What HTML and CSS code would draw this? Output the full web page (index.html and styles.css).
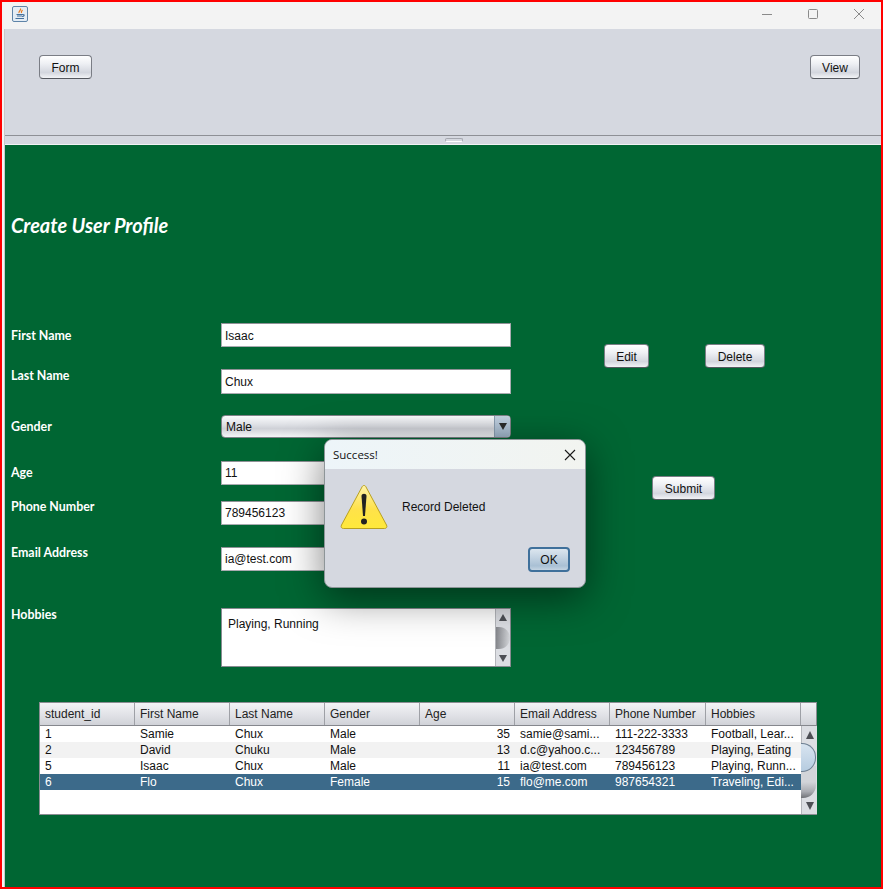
FILE: index.html
```html
<!DOCTYPE html>
<html>
<head>
	<meta charset="utf-8">
	<title>Create User Profile</title>
	<link rel="stylesheet" href="styles.css">
</head>
<body>
	<div class="frame">
		<div class="titlebar">
			<svg class="java_icon" width="16" height="16" viewBox="0 0 16 16">
				<rect x="0.5" y="0.5" width="15" height="15" rx="1.5" fill="#e4ecf4" stroke="#5f84a8"/>
				<path d="M8.5 2.5 C9.5 4 6.5 5 7 7 M10.5 4 C9.5 5 9 6 9.5 7" fill="none" stroke="#e8791e" stroke-width="1.2"/>
				<path d="M4.5 8.5 H10.5 M5 10 H10 M10.5 8.5 C13 8.5 12.5 10.5 10 10.5 M3.5 12.5 H12" fill="none" stroke="#44709c" stroke-width="1.1"/>
			</svg>
			<div class="win_controls">
				<svg width="12" height="12" viewBox="0 0 12 12"><path d="M1 6.5 H11" stroke="#8a8a8a"/></svg>
				<svg width="12" height="12" viewBox="0 0 12 12"><rect x="1.5" y="1.5" width="9" height="9" rx="1" fill="none" stroke="#8a8a8a"/></svg>
				<svg width="12" height="12" viewBox="0 0 12 12"><path d="M1 1 L11 11 M11 1 L1 11" stroke="#8a8a8a"/></svg>
			</div>
		</div>

		<div class="top_panel">
			<button class="btn btn_form">Form</button>
			<button class="btn btn_view">View</button>
		</div>

		<div class="splitter"><span class="grip"></span></div>

		<div class="main_panel">
			<h1 class="page_title">Create User Profile</h1>

			<div class="form_area">
				<div class="labels">
					<label class="lb_first">First Name</label>
					<label class="lb_last">Last Name</label>
					<label class="lb_gender">Gender</label>
					<label class="lb_age">Age</label>
					<label class="lb_phone">Phone Number</label>
					<label class="lb_email">Email Address</label>
					<label class="lb_hobbies">Hobbies</label>
				</div>

				<div class="fields">
					<div class="text_field tf_first">Isaac</div>
					<div class="text_field tf_last">Chux</div>
					<div class="combo">
						<span class="combo_text">Male</span>
						<span class="combo_arrow"><svg width="8" height="7" viewBox="0 0 8 7"><path d="M0 0 H8 L4 7 Z" fill="#2b2b2b"/></svg></span>
					</div>
					<div class="text_field tf_age">11</div>
					<div class="text_field tf_phone">789456123</div>
					<div class="text_field tf_email">ia@test.com</div>
					<div class="text_area">
						<span class="area_text">Playing, Running</span>
						<div class="area_scroll">
							<svg width="8" height="7" viewBox="0 0 8 7"><path d="M0 7 H8 L4 0 Z" fill="#4d4f55"/></svg>
							<span class="area_thumb"></span>
							<svg width="8" height="7" viewBox="0 0 8 7"><path d="M0 0 H8 L4 7 Z" fill="#4d4f55"/></svg>
						</div>
					</div>
				</div>

				<div class="actions">
					<div class="actions_row">
						<button class="btn btn_edit">Edit</button>
						<button class="btn btn_delete">Delete</button>
					</div>
					<button class="btn btn_submit">Submit</button>
				</div>
			</div>

			<div class="table_wrap">
				<div class="table_head">
					<div class="th">student_id</div>
					<div class="th">First Name</div>
					<div class="th">Last Name</div>
					<div class="th">Gender</div>
					<div class="th">Age</div>
					<div class="th">Email Address</div>
					<div class="th">Phone Number</div>
					<div class="th">Hobbies</div>
					<div class="th th_corner"></div>
				</div>
				<div class="table_body">
					<div class="rows">
						<div class="row"><span>1</span><span>Samie</span><span>Chux</span><span>Male</span><span class="num">35</span><span>samie@sami...</span><span>111-222-3333</span><span>Football, Lear...</span></div>
						<div class="row alt"><span>2</span><span>David</span><span>Chuku</span><span>Male</span><span class="num">13</span><span>d.c@yahoo.c...</span><span>123456789</span><span>Playing, Eating</span></div>
						<div class="row"><span>5</span><span>Isaac</span><span>Chux</span><span>Male</span><span class="num">11</span><span>ia@test.com</span><span>789456123</span><span>Playing, Runn...</span></div>
						<div class="row selected"><span>6</span><span>Flo</span><span>Chux</span><span>Female</span><span class="num">15</span><span>flo@me.com</span><span>987654321</span><span>Traveling, Edi...</span></div>
					</div>
					<div class="table_scroll">
						<svg width="8" height="8" viewBox="0 0 8 8"><path d="M0 8 H8 L4 0 Z" fill="#4d4f55"/></svg>
						<span class="table_track"></span>
						<span class="table_thumb"></span>
						<svg width="8" height="8" viewBox="0 0 8 8"><path d="M0 0 H8 L4 8 Z" fill="#4d4f55"/></svg>
					</div>
				</div>
			</div>
		</div>

		<div class="dialog">
			<div class="dialog_title">
				<span>Success!</span>
				<svg width="12" height="12" viewBox="0 0 12 12"><path d="M1 1 L11 11 M11 1 L1 11" stroke="#1a1a1a" stroke-width="1.1"/></svg>
			</div>
			<div class="dialog_body">
				<svg class="warn_icon" width="48" height="46" viewBox="0 0 48 46">
					<defs>
						<linearGradient id="warnfill" x1="0" y1="0" x2="0" y2="1">
							<stop offset="0" stop-color="#fff3a8"/>
							<stop offset="0.55" stop-color="#ffe24a"/>
							<stop offset="1" stop-color="#ffe93a"/>
						</linearGradient>
					</defs>
					<path d="M24 1.5 C25 1.5 25.5 2 26 3 L46.5 41 C47.5 43 46.5 44.5 44.5 44.5 H3.5 C1.5 44.5 0.5 43 1.5 41 L22 3 C22.5 2 23 1.5 24 1.5 Z" fill="url(#warnfill)" stroke="#b8a020"/>
					<path d="M21.5 12 C21.5 9 26.5 9 26.5 12 L25 32 H23 Z" fill="#222"/>
					<circle cx="24" cy="37.5" r="3" fill="#222"/>
				</svg>
				<span class="dialog_msg">Record Deleted</span>
			</div>
			<div class="dialog_foot">
				<button class="btn btn_ok">OK</button>
			</div>
		</div>
	</div>
</body>
</html>
```
FILE: styles.css
```css
html, body {
	margin: 0;
	width: 100%;
	height: 100%;
	overflow: hidden;
	font-family: "Liberation Sans", Arial, sans-serif;
	font-size: 12px;
	color: #111;
}

.frame {
	position: relative;
	box-sizing: border-box;
	width: 883px;
	height: 889px;
	border: 2px solid #ff0000;
	display: flex;
	flex-direction: column;
	background: linear-gradient(90deg, #f4f4f4, #f4f4f4 2px, #c9c9c9 2px);
}

.titlebar {
	height: 27px;
	flex: none;
	background: #f3f3f3;
	display: flex;
	align-items: center;
	justify-content: space-between;
	padding-left: 10px;
	padding-right: 16px;
}

.java_icon {
	margin-top: -3px;
}

.win_controls {
	display: flex;
	gap: 34px;
	margin-top: -3px;
}

.top_panel {
	height: 106px;
	flex: none;
	margin-left: 3px;
	background: #d5d8e0;
	display: flex;
	justify-content: space-between;
	align-items: flex-start;
	padding: 26px 21px 0 34px;
	box-sizing: border-box;
}

.splitter {
	height: 10px;
	flex: none;
	margin-left: 3px;
	box-sizing: border-box;
	border-top: 1px solid #8e9096;
	border-bottom: 1px solid #f2f3f5;
	background: #d5d8e0;
	display: flex;
	justify-content: center;
	padding-top: 2px;
}

.grip {
	width: 18px;
	height: 4px;
	border: 1px solid #a4a7af;
	border-bottom-color: #fff;
	border-radius: 2px;
	box-sizing: border-box;
	margin-left: 22px;
}

.btn {
	box-sizing: border-box;
	height: 24px;
	padding: 1px 0 0;
	border: 1px solid #7a7d85;
	border-bottom-color: #55585f;
	border-radius: 4px;
	background: linear-gradient(#ffffff 0%, #eef0f4 35%, #d3d6de 75%, #f2f3f6 100%);
	font-family: inherit;
	font-size: 12px;
	color: #111;
}

.btn_form { width: 53px; }
.btn_view { width: 50px; }

.main_panel {
	flex: 1;
	margin-left: 3px;
	background: #006633;
	position: relative;
	padding-top: 70px;
}

.page_title {
	margin: 0 0 0 6px;
	height: 22px;
	line-height: 20px;
	font-family: Lato, sans-serif;
	font-size: 20px;
	font-style: italic;
	font-weight: bold;
	color: #fff;
}

.form_area {
	display: flex;
	height: 465px;
}

.labels {
	width: 216px;
	flex: none;
	display: flex;
	flex-direction: column;
	padding-left: 6px;
	box-sizing: border-box;
}

.labels label {
	font-family: Lato, sans-serif;
	font-weight: bold;
	font-size: 12.4px;
	line-height: 16px;
	color: #fff;
}

.lb_first { margin-top: 91px; }
.lb_last { margin-top: 24px; }
.lb_gender { margin-top: 35px; }
.lb_age { margin-top: 30px; }
.lb_phone { margin-top: 18px; }
.lb_email { margin-top: 30px; }
.lb_hobbies { margin-top: 46px; }

.fields {
	width: 290px;
	flex: none;
	display: flex;
	flex-direction: column;
	padding-top: 86px;
}

.text_field {
	box-sizing: border-box;
	height: 24px;
	line-height: 23px;
	padding-left: 3px;
	background: #fff;
	border: 1px solid #a9abb0;
	border-top-color: #8f9196;
	font-size: 12px;
}

.tf_first { line-height: 25px; }
.tf_last { margin-top: 22px; height: 25px; line-height: 24px; }
.tf_age { margin-top: 23px; }
.tf_phone { margin-top: 16px; }
.tf_email { margin-top: 22px; }

.combo {
	box-sizing: border-box;
	margin-top: 21px;
	height: 23px;
	display: flex;
	align-items: stretch;
	border: 1px solid #7f8288;
	border-radius: 4px;
	background: linear-gradient(#fafbfc 0%, #dfe1e6 40%, #cfd1d7 60%, #f4f5f7 100%);
}

.combo_text {
	flex: 1;
	line-height: 22px;
	padding-left: 4px;
}

.combo_arrow {
	width: 15px;
	display: flex;
	align-items: center;
	justify-content: center;
	background: linear-gradient(#c3d2e1, #9fb4c9);
	border-left: 1px solid #8a9db0;
	border-radius: 0 3px 3px 0;
}

.text_area {
	box-sizing: border-box;
	margin-top: 37px;
	height: 59px;
	display: flex;
	background: #fff;
	border: 1px solid #888b91;
}

.area_text {
	flex: 1;
	padding: 8px 0 0 6px;
	line-height: 15px;
}

.area_scroll {
	width: 15px;
	flex: none;
	box-sizing: border-box;
	border-left: 1px solid #b4b6bb;
	background: #dcdee3;
	display: flex;
	flex-direction: column;
	align-items: center;
	justify-content: space-between;
	padding: 5px 0 4px;
}

.area_thumb {
	width: 14px;
	height: 22px;
	margin-left: -1px;
	border-radius: 0 11px 11px 0;
	background: linear-gradient(90deg, #85878c, #d5d7db);
}

.actions {
	flex: 1;
	display: flex;
	flex-direction: column;
	padding-left: 93px;
	padding-top: 107px;
}

.actions_row {
	display: flex;
	gap: 56px;
}

.btn_edit { width: 45px; }
.btn_delete { width: 60px; }
.btn_submit { width: 63px; margin-left: 48px; margin-top: 108px; }

.table_wrap {
	box-sizing: border-box;
	width: 778px;
	height: 113px;
	margin-left: 34px;
	border: 1px solid #8b8d93;
	background: #fff;
	display: flex;
	flex-direction: column;
}

.table_head {
	height: 23px;
	flex: none;
	display: grid;
	grid-template-columns: 95px 95px 95px 95px 95px 95px 96px 95px 1fr;
	background: linear-gradient(#f3f4f6 0%, #dfe0e5 60%, #d0d2d8 100%);
	border-bottom: 1px solid #85878d;
	box-sizing: border-box;
}

.th {
	box-sizing: border-box;
	padding-left: 5px;
	line-height: 22px;
	border-right: 1px solid #9ea0a6;
	color: #222;
}

.th_corner {
	border-right: none;
}

.table_body {
	flex: 1;
	display: flex;
	min-height: 0;
}

.rows {
	flex: 1;
}

.row {
	height: 16px;
	line-height: 16px;
	display: grid;
	grid-template-columns: 95px 95px 95px 95px 95px 95px 96px 95px;
	color: #111;
}

.row span {
	padding-left: 5px;
	white-space: nowrap;
	overflow: hidden;
}

.row .num {
	padding-left: 0;
	padding-right: 5px;
	text-align: right;
}

.row.alt {
	background: #f2f2f2;
}

.row.selected {
	background: #3c6a8a;
	color: #fff;
}

.table_scroll {
	width: 16px;
	flex: none;
	box-sizing: border-box;
	background: #dcdee3;
	border-left: 1px solid #b4b6bb;
	display: flex;
	flex-direction: column;
	align-items: center;
	justify-content: space-between;
	padding: 5px 0 4px;
	position: relative;
}

.table_thumb {
	position: absolute;
	left: -1px;
	top: 17px;
	width: 15px;
	height: 29px;
	box-sizing: border-box;
	border: 1px solid #6d7f92;
	border-left: none;
	border-radius: 0 14px 14px 0;
	background: linear-gradient(#d8e4f0, #b6cce0);
}

.table_track {
	position: absolute;
	left: -1px;
	top: 40px;
	width: 15px;
	height: 32px;
	box-sizing: border-box;
	border-radius: 0 0 13px 0;
	background: linear-gradient(#d2d4d9 50%, #a9abb1 80%, #6f7176 100%);
}

.dialog {
	position: absolute;
	left: 322px;
	top: 437px;
	width: 262px;
	height: 149px;
	box-sizing: border-box;
	border: 1px solid #8d9598;
	border-radius: 8px;
	background: #d5d8e0;
	box-shadow: 0 10px 40px rgba(0, 0, 0, 0.5);
	display: flex;
	flex-direction: column;
	overflow: hidden;
}

.dialog_title {
	height: 29px;
	flex: none;
	display: flex;
	align-items: center;
	justify-content: space-between;
	padding: 0 9px 0 8px;
	background: linear-gradient(90deg, #edf5f9, #f2f4f0);
	font-family: "Open Sans", sans-serif;
	font-size: 11.5px;
}

.dialog_body {
	display: flex;
	align-items: flex-start;
	padding: 15px 0 0 15px;
}

.dialog_msg {
	margin-left: 14px;
	margin-top: 15px;
	line-height: 16px;
}

.dialog_foot {
	display: flex;
	justify-content: flex-end;
	padding: 17px 15px 0 0;
}

.btn_ok {
	width: 42px;
	height: 25px;
	border: 2px solid #3f709b;
	background: linear-gradient(#dce6ef 0%, #c3d3e2 40%, #a9c0d4 80%, #c4d4e2 100%);
}
```
